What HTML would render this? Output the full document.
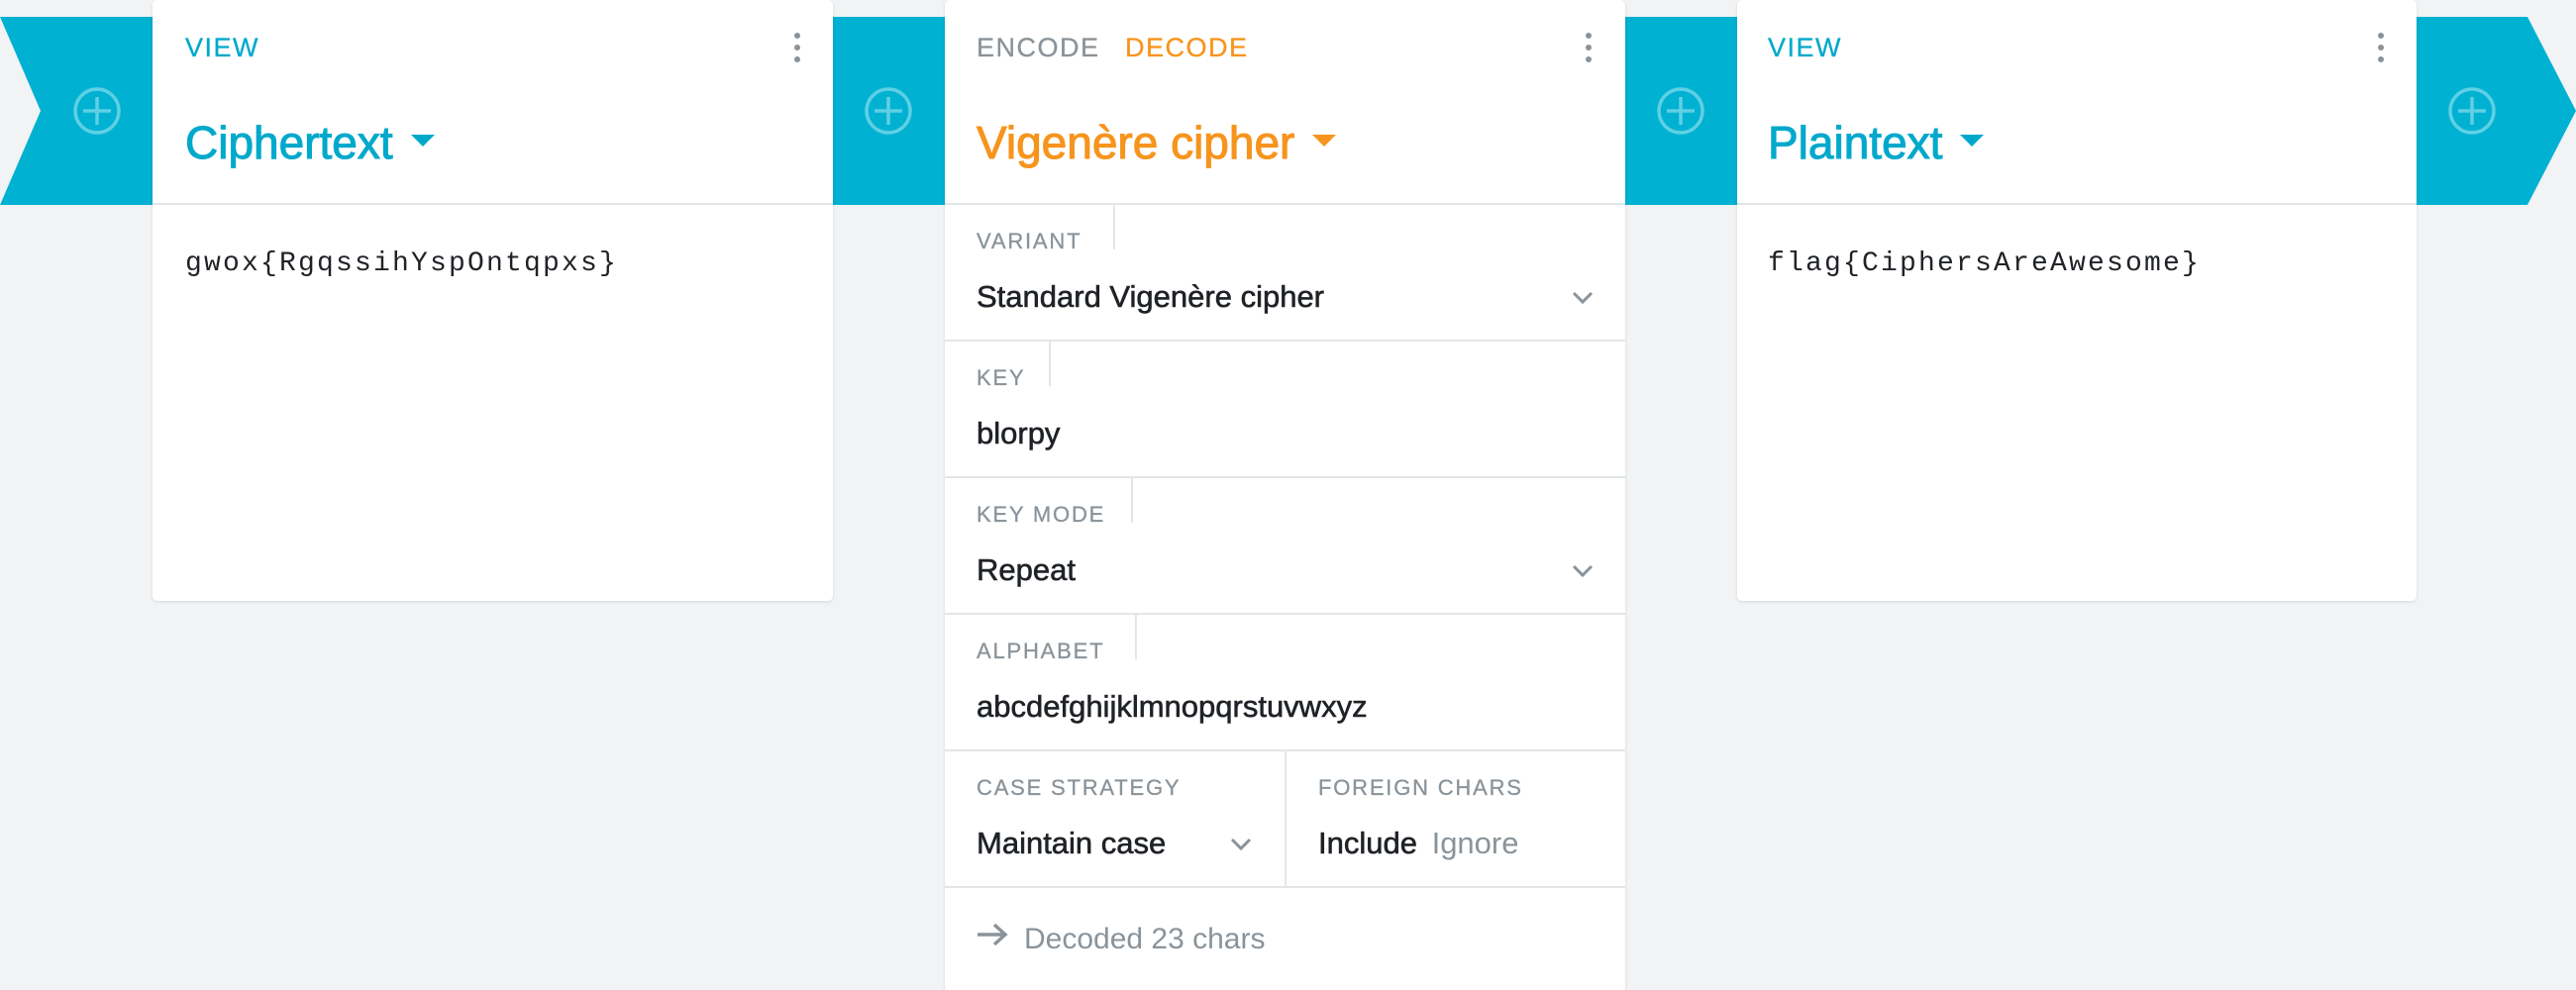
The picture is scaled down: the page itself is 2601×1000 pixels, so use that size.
<!DOCTYPE html>
<html><head><meta charset="utf-8"><style>
*{margin:0;padding:0;box-sizing:border-box}
body{width:2601px;height:992px;background:#f2f3f5;position:relative;overflow:hidden;font-family:"Liberation Sans",Arial,sans-serif}
.card{position:absolute;top:0;background:#fff;border-radius:5px;box-shadow:0 1px 3px rgba(0,0,0,.12)}
.hdr{position:absolute;left:0;right:0;top:0;height:207px;border-bottom:2px solid #e3e6e9}
.sm{position:absolute;top:33px;font-size:27px;letter-spacing:1.5px;-webkit-text-stroke:0.3px currentColor}
.title{position:absolute;top:117px;font-size:46px;-webkit-text-stroke:1px currentColor}
.tri{display:inline-block;width:0;height:0;border-left:12px solid transparent;border-right:12px solid transparent;border-top:12px solid currentColor;vertical-align:middle;margin-left:18px;position:relative;top:-6px}
.keb{position:absolute;top:33px;width:6px}
.keb i{display:block;width:6px;height:6px;border-radius:3px;background:#8a9399;margin-bottom:6px}
.mono{position:absolute;top:251px;font-family:"Liberation Mono",monospace;font-size:28px;letter-spacing:2.2px;color:#1f2226}
.row{position:absolute;left:0;right:0;height:138px;border-bottom:2px solid #e3e6e9}
.lab{position:absolute;top:24px;left:32px;font-size:22px;letter-spacing:1.8px;color:#8a9399;-webkit-text-stroke:0.3px currentColor}
.tab{position:absolute;top:0;width:2px;height:45px;background:#e3e6e9}
.val{position:absolute;top:75px;left:32px;font-size:31px;color:#1f2226;-webkit-text-stroke:0.6px currentColor}
.chev{position:absolute;top:86px;width:24px;height:16px}
</style></head><body>
<svg width="2601" height="992" style="position:absolute;left:0;top:0">
<polygon points="0,17 154,17 154,207 0,207 41,112" fill="#00b1d2"/>
<rect x="841" y="17" width="113" height="190" fill="#00b1d2"/>
<rect x="1641" y="17" width="113" height="190" fill="#00b1d2"/>
<polygon points="2440,17 2552,17 2601,112 2552,207 2440,207" fill="#00b1d2"/>
<g fill="none" stroke="#5fd0e4" stroke-width="3.5">
<circle cx="98" cy="112" r="22"/><path d="M98 98v28M84 112h28"/>
<circle cx="897" cy="112" r="22"/><path d="M897 98v28M883 112h28"/>
<circle cx="1697" cy="112" r="22"/><path d="M1697 98v28M1683 112h28"/>
<circle cx="2496" cy="112" r="22"/><path d="M2496 98v28M2482 112h28"/>
</g>
</svg>

<div class="card" style="left:154px;width:687px;height:607px">
<div class="hdr"></div>
<div class="sm" style="left:33px;color:#00a9cc">VIEW</div>
<div class="keb" style="left:648px"><i></i><i></i><i></i></div>
<div class="title" style="left:33px;color:#00a9cc">Ciphertext<span class="tri"></span></div>
<div class="mono" style="left:33px">gwox{RgqssihYspOntqpxs}</div>
</div>

<div class="card" style="left:954px;width:687px;height:1000px;border-radius:5px 5px 0 0">
<div class="hdr"></div>
<div class="sm" style="left:32px;color:#8a9399">ENCODE</div>
<div class="sm" style="left:182px;color:#f7941d">DECODE</div>
<div class="keb" style="left:647px"><i></i><i></i><i></i></div>
<div class="title" style="left:32px;color:#f7941d">Vigenère cipher<span class="tri"></span></div>
<div class="row" style="top:207px"><div class="lab">VARIANT</div><div class="tab" style="left:170px"></div><div class="val">Standard Vigenère cipher</div>
<svg class="chev" style="left:632px" viewBox="0 0 24 16"><path d="M3 3l9 9 9-9" fill="none" stroke="#8a9399" stroke-width="3"/></svg></div>
<div class="row" style="top:345px"><div class="lab">KEY</div><div class="tab" style="left:105px"></div><div class="val">blorpy</div></div>
<div class="row" style="top:483px"><div class="lab">KEY MODE</div><div class="tab" style="left:188px"></div><div class="val">Repeat</div>
<svg class="chev" style="left:632px" viewBox="0 0 24 16"><path d="M3 3l9 9 9-9" fill="none" stroke="#8a9399" stroke-width="3"/></svg></div>
<div class="row" style="top:621px"><div class="lab">ALPHABET</div><div class="tab" style="left:192px"></div><div class="val">abcdefghijklmnopqrstuvwxyz</div></div>
<div class="row" style="top:759px">
<div class="lab">CASE STRATEGY</div><div class="val">Maintain case</div>
<svg class="chev" style="left:287px" viewBox="0 0 24 16"><path d="M3 3l9 9 9-9" fill="none" stroke="#8a9399" stroke-width="3"/></svg>
<div style="position:absolute;left:343px;top:0;width:2px;height:138px;background:#e3e6e9"></div>
<div class="lab" style="left:377px">FOREIGN CHARS</div>
<div class="val" style="left:377px">Include <span style="color:#8a9399;margin-left:6px;-webkit-text-stroke:0">Ignore</span></div>
</div>
<svg style="position:absolute;left:31px;top:932px" width="34" height="24" viewBox="0 0 34 24"><path d="M2 12h28M19 2l11 10-11 10" fill="none" stroke="#8a9399" stroke-width="3.5"/></svg>
<div style="position:absolute;left:80px;top:932px;font-size:30px;color:#8a9399">Decoded 23 chars</div>
</div>

<div class="card" style="left:1754px;width:686px;height:607px">
<div class="hdr"></div>
<div class="sm" style="left:31px;color:#00a9cc">VIEW</div>
<div class="keb" style="left:647px"><i></i><i></i><i></i></div>
<div class="title" style="left:31px;color:#00a9cc">Plaintext<span class="tri"></span></div>
<div class="mono" style="left:31px">flag{CiphersAreAwesome}</div>
</div>
</body></html>
